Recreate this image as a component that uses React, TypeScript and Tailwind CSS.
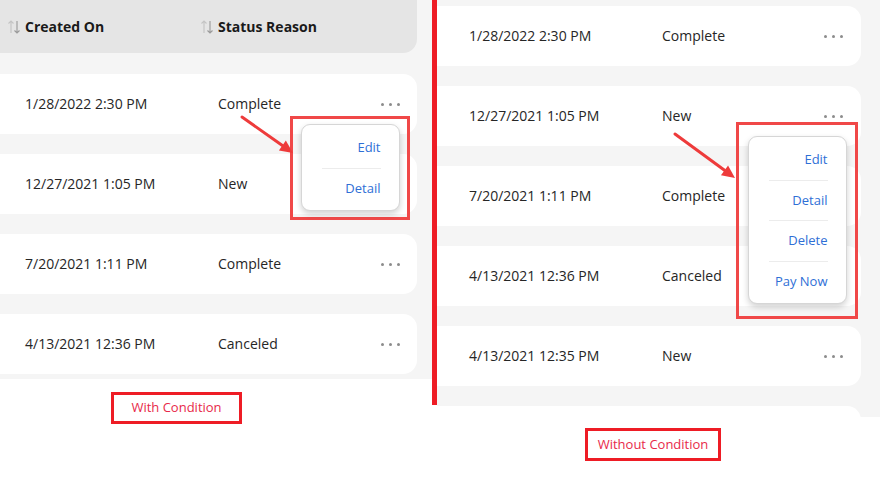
import React from "react";

const font = { fontFamily: '"Open Sans", "Noto Sans", sans-serif' };

function SortIcon() {
  return (
    <svg width="14" height="16" viewBox="0 0 14 16" className="shrink-0">
      <path d="M4 14V2M1.5 4.5L4 2l2.5 2.5" stroke="#c4c4c4" strokeWidth="1.1" fill="none" />
      <path d="M10 2v12M7.5 11.5L10 14l2.5-2.5" stroke="#9a9a9a" strokeWidth="1.1" fill="none" />
    </svg>
  );
}

function Dots() {
  return (
    <div className="flex items-center gap-[5px]">
      <span className="w-[3px] h-[3px] rounded-full bg-[#8c8c8c]" />
      <span className="w-[3px] h-[3px] rounded-full bg-[#8c8c8c]" />
      <span className="w-[3px] h-[3px] rounded-full bg-[#8c8c8c]" />
    </div>
  );
}

function Row({ date, status, className }: { date: string; status: string; className: string }) {
  return (
    <div className={`h-[60px] shrink-0 bg-white rounded-r-[14px] flex items-center text-[14px] text-[#262626] ${className}`}>
      <div className="w-[193px] -mt-[1px]">{date}</div>
      <div className="flex-1 -mt-[1px]">{status}</div>
      <Dots />
    </div>
  );
}

function Menu({ items }: { items: string[] }) {
  return (
    <div className="w-[99px] bg-white rounded-[9px] border border-[#d6d6d6] shadow-[0_3px_6px_rgba(0,0,0,0.18)] pl-[20px] pr-[18px] py-[2px] flex flex-col">
      {items.map((it, i) => (
        <div
          key={it}
          className={`h-[40.5px] flex items-center justify-end text-[13px] text-[#2f6fd6] ${i > 0 ? "border-t border-[#ececec]" : ""}`}
        >
          {it}
        </div>
      ))}
    </div>
  );
}

function Arrow({ x1, y1, x2, y2 }: { x1: number; y1: number; x2: number; y2: number }) {
  const ang = Math.atan2(y2 - y1, x2 - x1);
  const L = 13;
  const W = 6;
  const bx = x2 - L * Math.cos(ang);
  const by = y2 - L * Math.sin(ang);
  const px = -Math.sin(ang) * W;
  const py = Math.cos(ang) * W;
  return (
    <>
      <line x1={x1} y1={y1} x2={bx} y2={by} stroke="#ee3b3b" strokeWidth="3" strokeLinecap="round" />
      <polygon points={`${x2},${y2} ${bx + px},${by + py} ${bx - px},${by - py}`} fill="#ee3b3b" />
    </>
  );
}

export default function App() {
  return (
    <div className="relative w-[896px] h-[480px] bg-white overflow-hidden" style={font}>
      <div className="flex items-start">
        {/* Left panel */}
        <div className="w-[432px] h-[379px] bg-[#f5f5f5] flex flex-col">
          <div className="w-[417px] h-[53px] shrink-0 bg-[#e5e5e5] rounded-br-[14px] flex items-center text-[14px] font-bold text-[#1a1a1a]">
            <div className="w-[200px] flex items-center gap-[4px] pl-[7px]">
              <SortIcon />
              <span>Created On</span>
            </div>
            <div className="flex items-center gap-[4px]">
              <SortIcon />
              <span>Status Reason</span>
            </div>
          </div>
          <div className="flex flex-col gap-[20px] pt-[21px]">
            <Row className="w-[417px] pl-[25px] pr-[17px]" date="1/28/2022 2:30 PM" status="Complete" />
            <Row className="w-[417px] pl-[25px] pr-[17px]" date="12/27/2021 1:05 PM" status="New" />
            <Row className="w-[417px] pl-[25px] pr-[17px]" date="7/20/2021 1:11 PM" status="Complete" />
            <Row className="w-[417px] pl-[25px] pr-[17px]" date="4/13/2021 12:36 PM" status="Canceled" />
          </div>
        </div>
        {/* Red divider */}
        <div className="w-[5px] h-[405px] bg-[#ee1c25] shrink-0" />
        {/* Right panel */}
        <div className="w-[443px] h-[417px] bg-[#f5f5f5] overflow-hidden flex flex-col gap-[20px] pt-[6px]">
          <Row className="w-[424px] pl-[32px] pr-[18px]" date="1/28/2022 2:30 PM" status="Complete" />
          <Row className="w-[424px] pl-[32px] pr-[18px]" date="12/27/2021 1:05 PM" status="New" />
          <Row className="w-[424px] pl-[32px] pr-[18px]" date="7/20/2021 1:11 PM" status="Complete" />
          <Row className="w-[424px] pl-[32px] pr-[18px]" date="4/13/2021 12:36 PM" status="Canceled" />
          <Row className="w-[424px] pl-[32px] pr-[18px]" date="4/13/2021 12:35 PM" status="New" />
          <Row className="w-[424px] pl-[32px] pr-[18px]" date="" status="" />
        </div>
      </div>

      {/* Left menu */}
      <div className="absolute left-[290px] top-[116px] w-[120px] h-[104px] border-[3px] border-[#f04848] flex items-start justify-center pt-[5px]">
        <Menu items={["Edit", "Detail"]} />
      </div>

      {/* Right menu */}
      <div className="absolute left-[736px] top-[122px] w-[122px] h-[197px] border-[3px] border-[#f04848] flex items-start justify-center pt-[11px]">
        <Menu items={["Edit", "Detail", "Delete", "Pay Now"]} />
      </div>

      <svg className="absolute left-0 top-0" width="896" height="480">
        <Arrow x1={242} y1={117} x2={293} y2={153} />
        <Arrow x1={675} y1={134} x2={735} y2={178} />
      </svg>

      {/* Labels */}
      <div className="absolute left-[111px] top-[392px] w-[131px] h-[32px] border-[3px] border-[#ee1c25] flex items-center justify-center text-[13px] text-[#e8294a]">
        With Condition
      </div>
      <div className="absolute left-[585px] top-[428px] w-[136px] h-[33px] border-[3px] border-[#ee1c25] flex items-center justify-center text-[13px] text-[#e8294a]">
        Without Condition
      </div>
    </div>
  );
}
